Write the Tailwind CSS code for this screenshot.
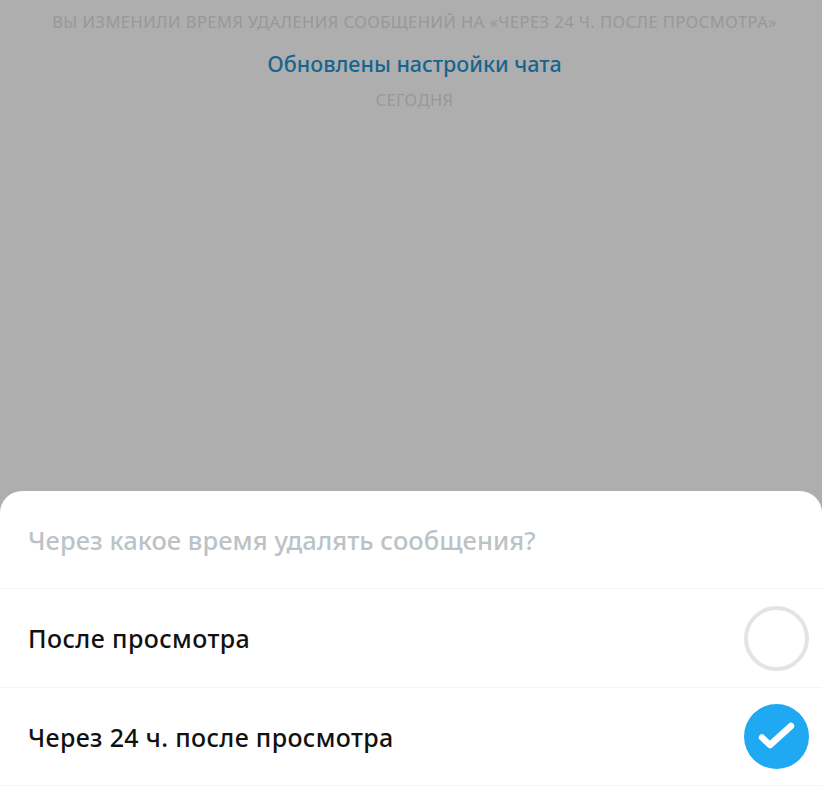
<!DOCTYPE html>
<html lang="ru">
<head>
  <meta charset="UTF-8">
  <title>Чат</title>
  <script src="https://cdn.jsdelivr.net/npm/@tailwindcss/browser@4"></script>
</head>
<body class="bg-[#aeaeae] font-['Noto_Sans',sans-serif]">
  <div class="h-[787px] w-[822px] overflow-hidden flex flex-col">
    <div class="h-[491px] shrink-0 flex flex-col items-center pt-[13px] pl-[7px]">
      <p class="h-[18px] leading-[18px] text-[16.5px] tracking-[0.45px] text-[#989898] whitespace-nowrap">ВЫ ИЗМЕНИЛИ ВРЕМЯ УДАЛЕНИЯ СООБЩЕНИЙ НА «ЧЕРЕЗ 24 Ч. ПОСЛЕ ПРОСМОТРА»</p>
      <p class="mt-[20px] h-[26px] leading-[26px] text-[21.5px] font-medium text-[#17658f] whitespace-nowrap">Обновлены настройки чата</p>
      <p class="mt-[14px] h-[18px] leading-[18px] text-[16.5px] tracking-[0.45px] text-[#989898]">СЕГОДНЯ</p>
    </div>
    <div class="flex-1 bg-white rounded-t-[22px]">
      <div class="h-[98px] flex items-center px-[28px] border-b border-[#f3f4f4]">
        <p class="pt-[1px] text-[25.5px] tracking-[0.05px] font-medium text-[#bcc3c6] whitespace-nowrap">Через какое время удалять сообщения?</p>
      </div>
      <div class="h-[99px] flex items-center justify-between pl-[28px] pr-[13px] border-b border-[#f3f4f4]">
        <p class="pt-[2px] text-[25px] tracking-[0.4px] font-medium text-[#111] whitespace-nowrap">После просмотра</p>
        <div class="w-[65px] h-[65px] rounded-full border-[4px] border-[#e3e4e5]"></div>
      </div>
      <div class="h-[98px] flex items-center justify-between pl-[28px] pr-[13px] border-b border-[#f3f4f4]">
        <p class="pt-[2px] text-[25px] tracking-[0.35px] font-medium text-[#111] whitespace-nowrap">Через 24 ч. после просмотра</p>
        <div class="w-[65px] h-[65px] rounded-full bg-[#1ea9f2] flex items-center justify-center">
          <svg width="65" height="65" viewBox="0 0 65 65" fill="none">
            <path d="M18 33.5 L26 41 L47 22" stroke="#fff" stroke-width="6.5" stroke-linecap="round" stroke-linejoin="round"/>
          </svg>
        </div>
      </div>
    </div>
  </div>
</body>
</html>
